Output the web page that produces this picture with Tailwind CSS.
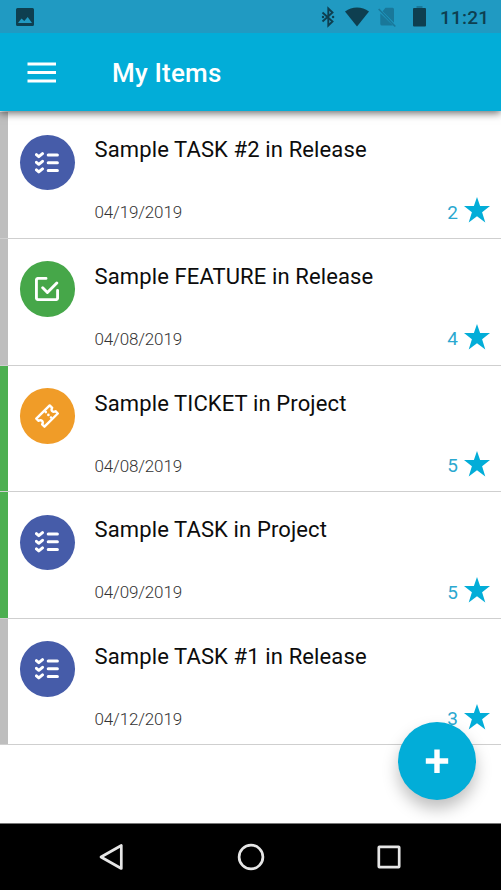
<!DOCTYPE html>
<html lang="en">
<head>
<meta charset="utf-8">
<title>My Items</title>
<script src="https://cdn.jsdelivr.net/npm/@tailwindcss/browser@4"></script>
</head>
<body class="bg-white">
<svg class="hidden">
  <symbol id="task" viewBox="0 0 24 24"><path d="M1.4 2.7l2.4 2 3.7-3M1.4 10.3l2.4 2 3.7-3M1.4 17.9l2.4 2 3.7-3M13.2 3h9.2M13.2 10.7h9.2M13.2 18.4h9.2" fill="none" stroke="#fff" stroke-width="3" stroke-linecap="round" stroke-linejoin="round"/></symbol>
  <symbol id="feature" viewBox="0 0 24 24"><path d="M11 1.400H3.200Q1.400 1.400 1.400 3.200V20.800Q1.400 22.600 3.200 22.600H20.800Q22.600 22.600 22.600 20.800V13.500M7.700 10.800l4.700 4.700 9.400-9.500" fill="none" stroke="#fff" stroke-width="2.900" stroke-linecap="round" stroke-linejoin="round"/></symbol>
  <symbol id="ticket" viewBox="0 0 24 24"><path d="M1.300 14.600L14.700 1.400L17.200 3.800Q16 6 17.200 7.100Q18.500 8.200 20.500 7.200L22.800 9.500L9.500 22.700L7.200 20.400Q8.400 18.300 7.100 16.900Q5.700 15.600 3.600 16.800Z" fill="none" stroke="#fff" stroke-width="2.400" stroke-linejoin="round"/><path d="M10.800 8.100h.01M13.400 10.900h.01M16 13.500h.01" stroke="#fff" stroke-width="2.600" stroke-linecap="round"/></symbol>
  <symbol id="star" viewBox="0 0 26 26"><path d="M13 0L16.100 9.100H26L18.100 15.200L21.300 25.400L13 19.300L4.700 25.400L7.900 15.200L0 9.100H9.900Z" fill="#02add8"/></symbol>
</svg>
<div class="relative flex h-[890px] w-[501px] flex-col overflow-hidden bg-white font-['Roboto',sans-serif]">
  <header class="relative z-10 h-[111px] shrink-0 bg-[#02add8] shadow-[0_2px_8px_rgba(0,0,0,0.6)]">
    <div class="flex h-[33px] items-center bg-[#209ac2] pl-4 text-[#0e3f50]">
      <svg class="size-[18px]" viewBox="0 0 18 18"><path fill-rule="evenodd" d="M1.500 0h15Q18 0 18 1.500v15Q18 18 16.500 18h-15Q0 18 0 16.500v-15Q0 0 1.500 0ZM2 15H16L11.700 9L8.300 13L5.500 10.500Z" fill="currentColor"/></svg>
      <svg class="ml-[287px] h-[22px] w-[14px]" viewBox="0 0 14 22"><path d="M1.500 6.500L11.500 15.500L7.300 19.500V2.500L11.500 6.500L1.500 15.500" fill="none" stroke="currentColor" stroke-width="1.900"/><circle cx="2" cy="11" r="1.200" fill="currentColor"/><circle cx="12.100" cy="11" r="1.200" fill="currentColor"/></svg>
      <svg class="ml-[10px] h-[20px] w-[24px]" viewBox="0 0 24 20"><path d="M0 4.500Q5.500 .500 12 .500T24 4.500L12 19.500Z" fill="currentColor"/></svg>
      <svg class="ml-[9px] h-[20px] w-[18px] text-[#19789a]" viewBox="0 0 18 20"><path d="M7.500 .800H14.500Q16 .800 16 2.300V15.800L4.600 4.200ZM2.300 6.300L15 18.500H4Q2.300 18.500 2.300 17Z" fill="currentColor"/><path d="M.700 2L17.300 19.500" stroke="currentColor" stroke-width="1.600"/></svg>
      <svg class="ml-[17px] h-[21px] w-[13px]" viewBox="0 0 13 21"><path d="M3.500 0h6v2h-6z" fill="#19789a"/><rect y="2" width="13" height="18.500" rx="1" fill="currentColor"/></svg>
      <span class="ml-[14px] pt-px text-[19px] leading-none font-medium tracking-[0.2px] whitespace-nowrap">11:21</span>
    </div>
    <div class="flex h-[78px] items-center pl-[27px]">
      <svg class="h-[21px] w-[29px]" viewBox="0 0 29 21"><path d="M.500 2H29M.500 10.500H29M.500 19H29" stroke="#fff" stroke-width="3"/></svg>
      <h1 class="ml-[56px] pt-px text-[26px] leading-none font-medium tracking-[0.2px] whitespace-nowrap text-white">My Items</h1>
    </div>
  </header>

  <main class="flex h-[712px] shrink-0 flex-col pt-[1.400px] text-[#0c0c0c]">
    <article class="flex h-[126.600px] shrink-0 border-b border-[#cfcfcf]">
      <div class="w-2 bg-[#bebebe]"></div>
      <div class="mt-[22.500px] ml-[11.500px] flex size-[55.500px] items-center justify-center rounded-full bg-[#465ca9]"><svg class="mt-[2px] size-[24px]"><use href="#task"/></svg></div>
      <div class="ml-[19.500px] flex-1 pt-[25px]">
        <h2 class="text-[22px] leading-[26px] tracking-[0.120px] whitespace-nowrap">Sample TASK #2 in Release</h2>
        <div class="mt-[33px] flex h-[28px] items-center justify-between pr-[11px]"><time class="pt-[5px] text-[17px] leading-none font-light tracking-[-0.150px] text-[#333]">04/19/2019</time><div class="flex items-center gap-[6px]"><span class="pt-1 text-[19px] leading-none text-[#2ba8d0]">2</span><svg class="size-[26px]"><use href="#star"/></svg></div></div>
      </div>
    </article>
    <article class="flex h-[126.600px] shrink-0 border-b border-[#cfcfcf]">
      <div class="w-2 bg-[#bebebe]"></div>
      <div class="mt-[22.500px] ml-[11.500px] flex size-[55.500px] items-center justify-center rounded-full bg-[#46a749]"><svg class="size-[24px]"><use href="#feature"/></svg></div>
      <div class="ml-[19.500px] flex-1 pt-[25px]">
        <h2 class="text-[22px] leading-[26px] tracking-[0.120px] whitespace-nowrap">Sample FEATURE in Release</h2>
        <div class="mt-[33px] flex h-[28px] items-center justify-between pr-[11px]"><time class="pt-[5px] text-[17px] leading-none font-light tracking-[-0.150px] text-[#333]">04/08/2019</time><div class="flex items-center gap-[6px]"><span class="pt-1 text-[19px] leading-none text-[#2ba8d0]">4</span><svg class="size-[26px]"><use href="#star"/></svg></div></div>
      </div>
    </article>
    <article class="flex h-[126.600px] shrink-0 border-b border-[#cfcfcf]">
      <div class="w-2 bg-[#4caf50]"></div>
      <div class="mt-[22.500px] ml-[11.500px] flex size-[55.500px] items-center justify-center rounded-full bg-[#f09c28]"><svg class="size-[24px]"><use href="#ticket"/></svg></div>
      <div class="ml-[19.500px] flex-1 pt-[25px]">
        <h2 class="text-[22px] leading-[26px] tracking-[0.120px] whitespace-nowrap">Sample TICKET in Project</h2>
        <div class="mt-[33px] flex h-[28px] items-center justify-between pr-[11px]"><time class="pt-[5px] text-[17px] leading-none font-light tracking-[-0.150px] text-[#333]">04/08/2019</time><div class="flex items-center gap-[6px]"><span class="pt-1 text-[19px] leading-none text-[#2ba8d0]">5</span><svg class="size-[26px]"><use href="#star"/></svg></div></div>
      </div>
    </article>
    <article class="flex h-[126.600px] shrink-0 border-b border-[#cfcfcf]">
      <div class="w-2 bg-[#4caf50]"></div>
      <div class="mt-[22.500px] ml-[11.500px] flex size-[55.500px] items-center justify-center rounded-full bg-[#465ca9]"><svg class="mt-[2px] size-[24px]"><use href="#task"/></svg></div>
      <div class="ml-[19.500px] flex-1 pt-[25px]">
        <h2 class="text-[22px] leading-[26px] tracking-[0.120px] whitespace-nowrap">Sample TASK in Project</h2>
        <div class="mt-[33px] flex h-[28px] items-center justify-between pr-[11px]"><time class="pt-[5px] text-[17px] leading-none font-light tracking-[-0.150px] text-[#333]">04/09/2019</time><div class="flex items-center gap-[6px]"><span class="pt-1 text-[19px] leading-none text-[#2ba8d0]">5</span><svg class="size-[26px]"><use href="#star"/></svg></div></div>
      </div>
    </article>
    <article class="flex h-[126.600px] shrink-0 border-b border-[#cfcfcf]">
      <div class="w-2 bg-[#bebebe]"></div>
      <div class="mt-[22.500px] ml-[11.500px] flex size-[55.500px] items-center justify-center rounded-full bg-[#465ca9]"><svg class="mt-[2px] size-[24px]"><use href="#task"/></svg></div>
      <div class="ml-[19.500px] flex-1 pt-[25px]">
        <h2 class="text-[22px] leading-[26px] tracking-[0.120px] whitespace-nowrap">Sample TASK #1 in Release</h2>
        <div class="mt-[33px] flex h-[28px] items-center justify-between pr-[11px]"><time class="pt-[5px] text-[17px] leading-none font-light tracking-[-0.150px] text-[#333]">04/12/2019</time><div class="flex items-center gap-[6px]"><span class="pt-1 text-[19px] leading-none text-[#2ba8d0]">3</span><svg class="size-[26px]"><use href="#star"/></svg></div></div>
      </div>
    </article>
  </main>

  <button aria-label="Add" class="absolute top-[721.500px] left-[398px] z-10 flex size-[78px] items-center justify-center rounded-full bg-[#02add8] shadow-[0_9px_16px_rgba(0,0,0,0.25)]"><svg class="size-[24px]" viewBox="0 0 24 24"><path d="M12 .500V24M.800 12H23.200" stroke="#fff" stroke-width="5.400"/></svg></button>

  <nav class="relative z-20 flex flex-1 items-center justify-between border-t border-[#777] bg-black pr-[98px] pl-[98px] pb-px">
    <svg class="size-[28px]" viewBox="0 0 28 28"><path d="M3 14L23.300 2.500V25.500Z" fill="none" stroke="#e6e6e6" stroke-width="2.700" stroke-linejoin="round"/></svg>
    <svg class="size-[28px]" viewBox="0 0 28 28"><circle cx="14" cy="14" r="11.900" fill="none" stroke="#e6e6e6" stroke-width="2.700"/></svg>
    <svg class="size-[28px]" viewBox="0 0 28 28"><rect x="3.800" y="3.800" width="20.400" height="20.400" rx=".600" fill="none" stroke="#e6e6e6" stroke-width="2.700"/></svg>
  </nav>
</div>
</body>
</html>
